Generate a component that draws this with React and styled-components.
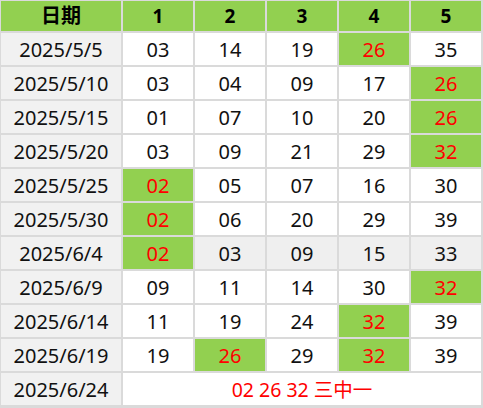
import { Fragment } from "react";
import styled, { createGlobalStyle } from "styled-components";

const GlobalStyle = createGlobalStyle`
  body {
    margin: 0;
    background: #ffffff;
    font-family: "Noto Sans", "Noto Sans CJK SC", sans-serif;
  }
`;

const Sheet = styled.div`
  display: grid;
  grid-template-columns: 120px repeat(5, 70px);
  grid-auto-rows: 32px;
  grid-template-rows: 30px;
  gap: 2px;
  padding: 1px 2px 3px 1px;
  width: 483px;
  box-sizing: border-box;
  background: #dadada;
`;

const Cell = styled.div`
  display: flex;
  align-items: center;
  justify-content: center;
  padding-top: 2px;
  box-sizing: border-box;
  font-size: 20px;
  color: #111111;
  line-height: 1;
`;

const HeaderCell = styled(Cell)`
  padding-top: 0;
  background: #92d050;
  font-weight: 700;
  font-size: ${(p) => (p.$wide ? "20px" : "19px")};
  color: #000000;
`;

const DateCell = styled(Cell)`
  background: #f1f1f1;
`;

const NumCell = styled(Cell)`
  background: ${(p) => (p.$hit ? "#92d050" : p.$shade ? "#efefef" : "#ffffff")};
  color: ${(p) => (p.$hit ? "#ff0000" : "#111111")};
`;

const ResultCell = styled(Cell)`
  grid-column: span 5;
  background: #ffffff;
  color: #ff0000;
  font-size: 19.5px;
`;

const rows = [
  { date: "2025/5/5", nums: ["03", "14", "19", "26", "35"], hits: [3] },
  { date: "2025/5/10", nums: ["03", "04", "09", "17", "26"], hits: [4] },
  { date: "2025/5/15", nums: ["01", "07", "10", "20", "26"], hits: [4] },
  { date: "2025/5/20", nums: ["03", "09", "21", "29", "32"], hits: [4] },
  { date: "2025/5/25", nums: ["02", "05", "07", "16", "30"], hits: [0] },
  { date: "2025/5/30", nums: ["02", "06", "20", "29", "39"], hits: [0] },
  { date: "2025/6/4", nums: ["02", "03", "09", "15", "33"], hits: [0], shade: true },
  { date: "2025/6/9", nums: ["09", "11", "14", "30", "32"], hits: [4] },
  { date: "2025/6/14", nums: ["11", "19", "24", "32", "39"], hits: [3] },
  { date: "2025/6/19", nums: ["19", "26", "29", "32", "39"], hits: [1, 3] },
];

export default function App() {
  return (
    <>
      <GlobalStyle />
      <Sheet>
        <HeaderCell $wide>日期</HeaderCell>
        {[1, 2, 3, 4, 5].map((n) => (
          <HeaderCell key={n}>{n}</HeaderCell>
        ))}
        {rows.map((row) => (
          <Fragment key={row.date}>
            <DateCell>{row.date}</DateCell>
            {row.nums.map((n, i) => (
              <NumCell key={i} $hit={row.hits.includes(i)} $shade={row.shade}>
                {n}
              </NumCell>
            ))}
          </Fragment>
        ))}
        <DateCell>2025/6/24</DateCell>
        <ResultCell>02 26 32 三中一</ResultCell>
      </Sheet>
    </>
  );
}
